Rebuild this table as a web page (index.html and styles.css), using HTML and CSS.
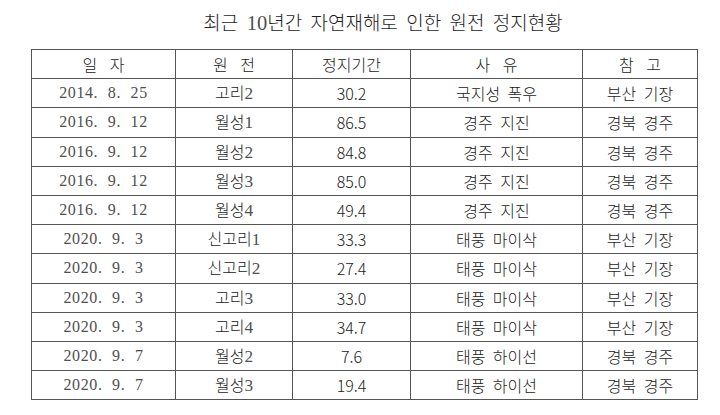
FILE: index.html
```html
<!DOCTYPE html>
<html lang="ko">
<head>
<meta charset="utf-8">
<link rel="stylesheet" href="styles.css">
</head>
<body>
<div class="page">
  <h1 class="title">최근 <span class="d">10</span>년간 자연재해로 인한 원전 정지현황</h1>
  <table class="grid">
    <colgroup>
      <col class="c1"><col class="c2"><col class="c3"><col class="c4"><col class="c5">
    </colgroup>
    <thead>
      <tr><th>일 자</th><th>원 전</th><th>정지기간</th><th>사 유</th><th>참 고</th></tr>
    </thead>
    <tbody>
      <tr><td class="date">2014. 8. 25</td><td>고리<span class="d">2</span></td><td class="num">30.2</td><td>국지성 폭우</td><td>부산 기장</td></tr>
      <tr><td class="date">2016. 9. 12</td><td>월성<span class="d">1</span></td><td class="num">86.5</td><td>경주 지진</td><td>경북 경주</td></tr>
      <tr><td class="date">2016. 9. 12</td><td>월성<span class="d">2</span></td><td class="num">84.8</td><td>경주 지진</td><td>경북 경주</td></tr>
      <tr><td class="date">2016. 9. 12</td><td>월성<span class="d">3</span></td><td class="num">85.0</td><td>경주 지진</td><td>경북 경주</td></tr>
      <tr><td class="date">2016. 9. 12</td><td>월성<span class="d">4</span></td><td class="num">49.4</td><td>경주 지진</td><td>경북 경주</td></tr>
      <tr><td class="date">2020. 9. 3</td><td>신고리<span class="d">1</span></td><td class="num">33.3</td><td>태풍 마이삭</td><td>부산 기장</td></tr>
      <tr><td class="date">2020. 9. 3</td><td>신고리<span class="d">2</span></td><td class="num">27.4</td><td>태풍 마이삭</td><td>부산 기장</td></tr>
      <tr><td class="date">2020. 9. 3</td><td>고리<span class="d">3</span></td><td class="num">33.0</td><td>태풍 마이삭</td><td>부산 기장</td></tr>
      <tr><td class="date">2020. 9. 3</td><td>고리<span class="d">4</span></td><td class="num">34.7</td><td>태풍 마이삭</td><td>부산 기장</td></tr>
      <tr><td class="date">2020. 9. 7</td><td>월성<span class="d">2</span></td><td class="num">7.6</td><td>태풍 하이선</td><td>경북 경주</td></tr>
      <tr><td class="date">2020. 9. 7</td><td>월성<span class="d">3</span></td><td class="num">19.4</td><td>태풍 하이선</td><td>경북 경주</td></tr>
    </tbody>
  </table>
</div>
</body>
</html>
```

FILE: styles.css
```css
html, body {
  margin: 0;
  padding: 0;
  background: #ffffff;
}

.page {
  width: 720px;
  height: 415px;
  font-family: "Noto Sans CJK KR", sans-serif;
  font-weight: 300;
  color: #222;
}

.title {
  margin: 0;
  padding: 9px 0 0 46px;
  height: 49px;
  box-sizing: border-box;
  text-align: center;
  font-weight: 300;
  font-size: 19px;
  line-height: 26px;
  word-spacing: 3px;
  color: #1e1e1e;
}

.d {
  font-family: "Liberation Serif", serif;
  font-weight: 400;
  font-size: 1.08em;
  color: #505050;
}

.grid {
  margin-left: 31px;
  width: 666px;
  border-collapse: collapse;
  table-layout: fixed;
  border: 1.5px solid #4a4a4a;
}

.c1 { width: 144px; }
.c2 { width: 117px; }
.c3 { width: 118px; }
.c4 { width: 172px; }
.c5 { width: 115px; }

.grid th,
.grid td {
  border: 1px solid #555;
  height: 28.2px;
  padding: 0;
  text-align: center;
  font-size: 16px;
  font-weight: 300;
  line-height: 20px;
  word-spacing: 3px;
  color: #222;
}

.grid th {
  word-spacing: 8px;
}

.grid .num {
  font-size: 16px;
  font-weight: 300;
  word-spacing: 0;
  color: #222;
}

.grid .date {
  font-family: "Liberation Serif", serif;
  font-size: 16px;
  font-weight: 400;
  word-spacing: 5px;
  letter-spacing: 0.6px;
  color: #505050;
}
```
